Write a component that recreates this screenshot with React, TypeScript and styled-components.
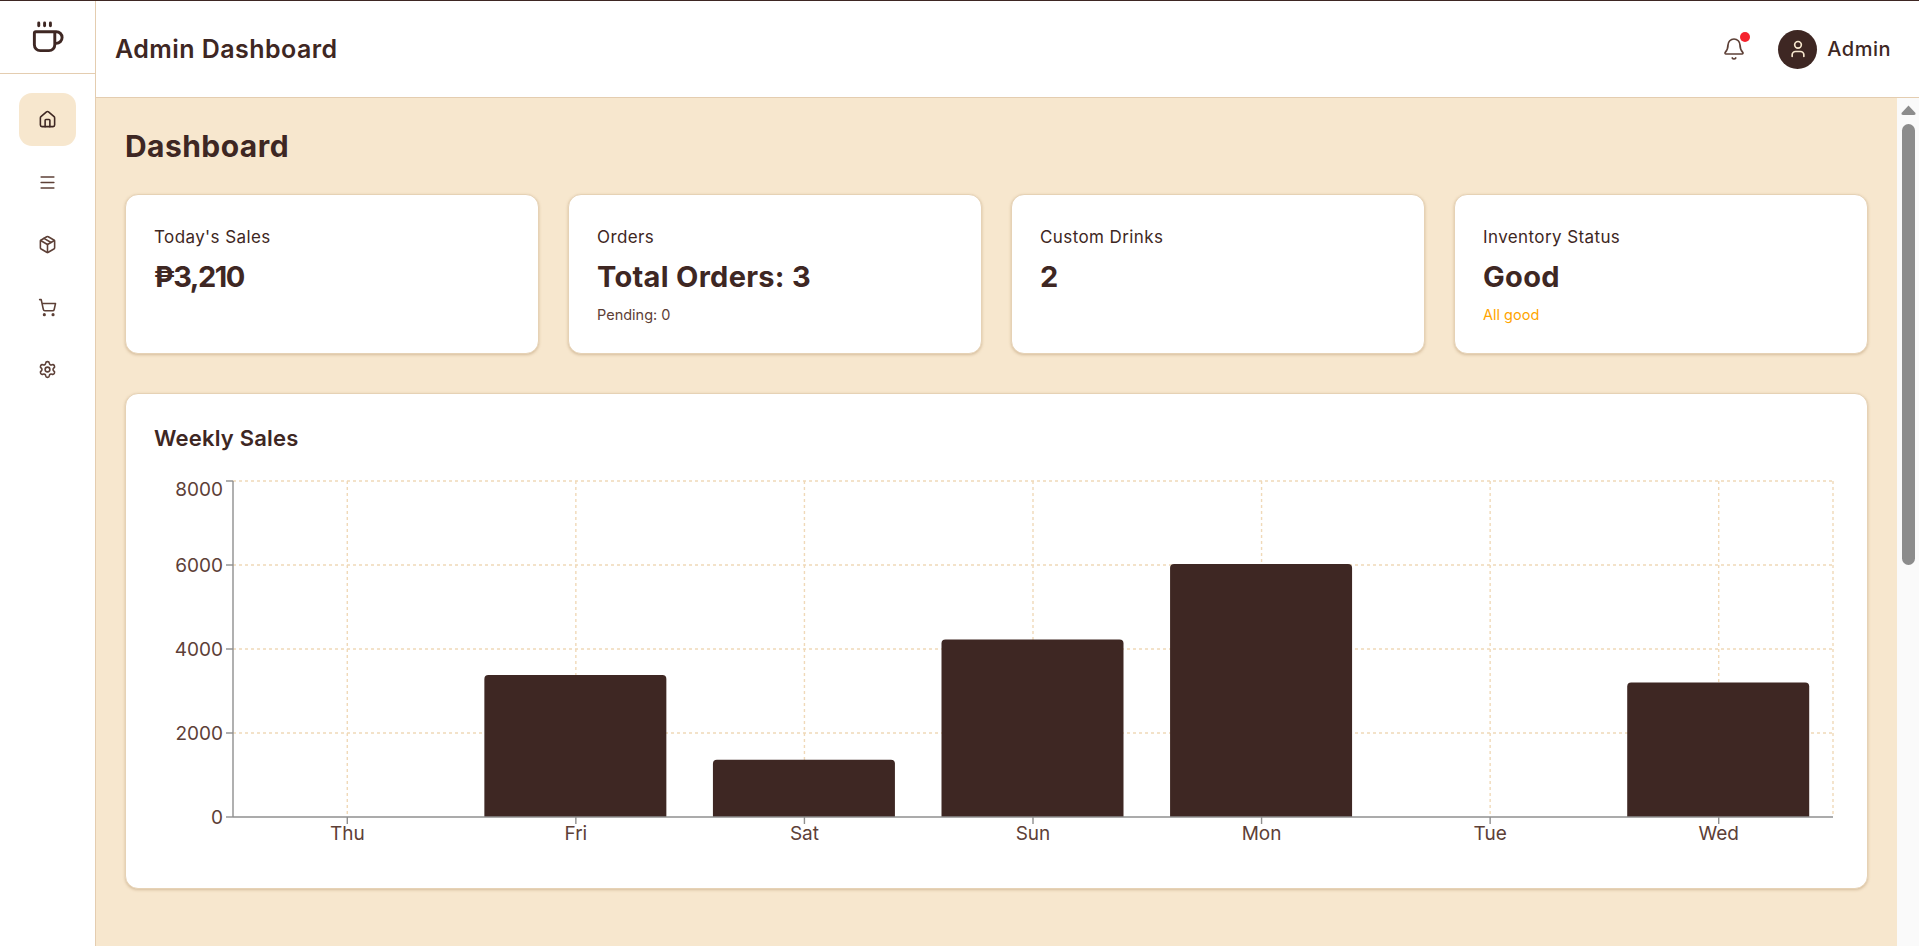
import { Bell, Coffee, House, Menu, Package, Settings, ShoppingCart, User } from "lucide-react";
import styled, { createGlobalStyle } from "styled-components";

const GlobalStyle = createGlobalStyle`
  html, body {
    margin: 0;
    height: 100%;
    overflow: hidden;
    background: #ffffff;
    font-family: Inter, "Noto Sans", "Liberation Sans", sans-serif;
    color: #3e2723;
  }
  * { box-sizing: border-box; }
`;

const Shell = styled.div`
  display: flex;
  height: 946px;
  border-top: 1px solid #3e2723;
`;

const Sidebar = styled.aside`
  width: 96px;
  flex-shrink: 0;
  background: #fff;
  border-right: 1px solid #e4cdb0;
`;

const Logo = styled.div`
  height: 73px;
  border-bottom: 1px solid #e4cdb0;
  display: flex;
  align-items: center;
  justify-content: center;
  color: #3e2723;
`;

const Nav = styled.nav`
  display: flex;
  flex-direction: column;
  gap: 9.5px;
  padding: 19px 19px 0;
`;

const NavItem = styled.a<{ $active?: boolean }>`
  width: 57px;
  height: 53px;
  border-radius: 13px;
  display: flex;
  align-items: center;
  justify-content: center;
  background: ${(props) => (props.$active ? "#f7e7ce" : "transparent")};
  color: ${(props) => (props.$active ? "#3e2723" : "#5d4037")};
`;

const Column = styled.div`
  flex: 1;
  min-width: 0;
  display: flex;
  flex-direction: column;
`;

const Topbar = styled.header`
  height: 97px;
  flex-shrink: 0;
  background: #fff;
  border-bottom: 1px solid #e4cdb0;
  display: flex;
  align-items: center;
  justify-content: space-between;
  padding: 0 28px 0 19px;
`;

const TopTitle = styled.h1`
  margin: 0;
  font-size: 25px;
  font-weight: 600;
  letter-spacing: 0.45px;
  color: #3e2723;
`;

const TopRight = styled.div`
  display: flex;
  align-items: center;
  gap: 32px;
`;

const BellWrap = styled.div`
  position: relative;
  display: flex;
  color: #5d4037;
`;

const Dot = styled.span`
  position: absolute;
  top: -5px;
  right: -4px;
  width: 10px;
  height: 10px;
  border-radius: 50%;
  background: #f5222d;
`;

const UserBox = styled.div`
  display: flex;
  align-items: center;
  gap: 10px;
`;

const Avatar = styled.div`
  width: 39px;
  height: 39px;
  border-radius: 50%;
  background: #3e2723;
  color: #f7e7ce;
  display: flex;
  align-items: center;
  justify-content: center;
`;

const UserName = styled.span`
  font-size: 20px;
  font-weight: 500;
  letter-spacing: 0.5px;
`;

const Body = styled.div`
  flex: 1;
  min-height: 0;
  display: flex;
`;

const Main = styled.main`
  flex: 1;
  min-width: 0;
  overflow: hidden;
  background: #f7e7ce;
  padding: 28px 29px 0;
`;

const ScrollTrack = styled.div`
  width: 22px;
  flex-shrink: 0;
  background: #fafafa;
  display: flex;
  flex-direction: column;
  align-items: center;
  padding: 7px 0 0 1px;
`;

const ScrollThumb = styled.div`
  width: 13px;
  height: 441px;
  margin-top: 9px;
  border-radius: 7px;
  background: #8c8c8c;
`;

const PageTitle = styled.h2`
  margin: 0 0 28px;
  height: 40px;
  line-height: 40px;
  font-size: 30px;
  font-weight: 700;
  letter-spacing: 0.45px;
  color: #3e2723;
`;

const CardGrid = styled.section`
  display: grid;
  grid-template-columns: repeat(4, 1fr);
  gap: 29px;
  margin-bottom: 39px;
`;

const Card = styled.div`
  height: 160px;
  background: #fff;
  border: 1px solid #e6d2b5;
  border-radius: 13px;
  box-shadow: 0 1px 3px rgba(150, 110, 60, 0.35);
  padding: 30px 28px;
`;

const CardLabel = styled.div`
  font-size: 17px;
  line-height: 24px;
  letter-spacing: 0.4px;
  color: #3e2723;
`;

const CardValue = styled.div<{ $tight?: boolean }>`
  margin-top: 7px;
  font-size: 29px;
  line-height: 42px;
  font-weight: 700;
  letter-spacing: ${(props) => (props.$tight ? "-1.5px" : "0.3px")};
  color: #3e2723;
`;

const CardNote = styled.div<{ $warn?: boolean }>`
  margin-top: 6px;
  font-size: 14.5px;
  line-height: 21px;
  color: ${(props) => (props.$warn ? "#ffa500" : "#5d4037")};
`;

const ChartPanel = styled.section`
  height: 496px;
  background: #fff;
  border: 1px solid #e6d2b5;
  border-radius: 13px;
  box-shadow: 0 1px 3px rgba(150, 110, 60, 0.35);
  padding: 29px 29px 0;
`;

const PanelTitle = styled.h3`
  margin: 0 0 10px -1px;
  font-size: 22px;
  line-height: 30px;
  font-weight: 600;
  letter-spacing: 0.2px;
  color: #3e2723;
`;

const ChartSvg = styled.svg`
  display: block;
  font-family: Inter, "Noto Sans", "Liberation Sans", sans-serif;
  font-size: 19px;
`;

const cards = [
  { label: "Today's Sales", value: "₱3,210", tight: true },
  { label: "Orders", value: "Total Orders: 3", note: "Pending: 0" },
  { label: "Custom Drinks", value: "2" },
  { label: "Inventory Status", value: "Good", note: "All good", warn: true },
];

const sales = [
  { day: "Thu", total: 0 },
  { day: "Fri", total: 3360 },
  { day: "Sat", total: 1340 },
  { day: "Sun", total: 4200 },
  { day: "Mon", total: 6000 },
  { day: "Tue", total: 0 },
  { day: "Wed", total: 3180 },
];

const left = 78;
const right = 1678;
const top = 18;
const bottom = 354;
const step = (right - left) / sales.length;
const barW = 182;
const yFor = (v: number) => bottom - (v / 8000) * (bottom - top);

function SalesChart() {
  const gridColor = "#f0d9b8";
  const axisColor = "#8f8f8f";
  const textColor = "#5d4037";
  return (
    <ChartSvg width={1684} height={400}>
      {[8000, 6000, 4000, 2000].map((v) => (
        <line key={v} x1={left} x2={right} y1={yFor(v)} y2={yFor(v)} stroke={gridColor} strokeWidth={1.4} strokeDasharray="3 3" />
      ))}
      {sales.map((s, i) => (
        <line key={s.day} x1={left + step * (i + 0.5)} x2={left + step * (i + 0.5)} y1={top} y2={bottom} stroke={gridColor} strokeWidth={1.4} strokeDasharray="3 3" />
      ))}
      <line x1={right} x2={right} y1={top} y2={bottom} stroke={gridColor} strokeWidth={1.4} strokeDasharray="3 3" />

      {sales.filter((s) => s.total > 0).map((s) => {
        const i = sales.indexOf(s);
        const x = left + step * (i + 0.5) - barW / 2 - 0.5;
        const y = yFor(s.total) - 1;
        return (
          <path
            key={s.day}
            d={`M${x} ${bottom}V${y + 4}Q${x} ${y} ${x + 4} ${y}H${x + barW - 4}Q${x + barW} ${y} ${x + barW} ${y + 4}V${bottom}Z`}
            fill="#3e2723"
          />
        );
      })}

      <line x1={left} x2={left} y1={top} y2={bottom} stroke={axisColor} strokeWidth={1.4} />
      <line x1={left} x2={right} y1={bottom} y2={bottom} stroke={axisColor} strokeWidth={1.4} />
      {[8000, 6000, 4000, 2000, 0].map((v) => (
        <g key={v}>
          <line x1={left - 7} x2={left} y1={yFor(v)} y2={yFor(v)} stroke={axisColor} strokeWidth={1.4} />
          <text x={left - 10} y={yFor(v) + (v === 8000 ? 15 : 7)} textAnchor="end" fill={textColor}>
            {v}
          </text>
        </g>
      ))}
      {sales.map((s, i) => (
        <g key={s.day}>
          <line x1={left + step * (i + 0.5)} x2={left + step * (i + 0.5)} y1={bottom} y2={bottom + 7} stroke={axisColor} strokeWidth={1.4} />
          <text x={left + step * (i + 0.5)} y={bottom + 23} textAnchor="middle" fill={textColor}>
            {s.day}
          </text>
        </g>
      ))}
    </ChartSvg>
  );
}

export default function App() {
  return (
    <>
      <GlobalStyle />
      <Shell>
        <Sidebar>
          <Logo>
            <Coffee size={35} strokeWidth={2} />
          </Logo>
          <Nav>
            <NavItem $active><House size={19} /></NavItem>
            <NavItem><Menu size={19} /></NavItem>
            <NavItem><Package size={19} /></NavItem>
            <NavItem><ShoppingCart size={19} /></NavItem>
            <NavItem><Settings size={19} /></NavItem>
          </Nav>
        </Sidebar>
        <Column>
          <Topbar>
            <TopTitle>Admin Dashboard</TopTitle>
            <TopRight>
              <BellWrap>
                <Bell size={24} strokeWidth={1.7} />
                <Dot />
              </BellWrap>
              <UserBox>
                <Avatar><User size={20} /></Avatar>
                <UserName>Admin</UserName>
              </UserBox>
            </TopRight>
          </Topbar>
          <Body>
            <Main>
              <PageTitle>Dashboard</PageTitle>
              <CardGrid>
                {cards.map((c) => (
                  <Card key={c.label}>
                    <CardLabel>{c.label}</CardLabel>
                    <CardValue $tight={c.tight}>{c.value}</CardValue>
                    {c.note && <CardNote $warn={c.warn}>{c.note}</CardNote>}
                  </Card>
                ))}
              </CardGrid>
              <ChartPanel>
                <PanelTitle>Weekly Sales</PanelTitle>
                <SalesChart />
              </ChartPanel>
            </Main>
            <ScrollTrack>
              <svg width="15" height="10" viewBox="0 0 15 10">
                <path d="M7.5 0.5 L14.5 8 Q15 10 13 10 L2 10 Q0 10 0.5 8 Z" fill="#8c8c8c" />
              </svg>
              <ScrollThumb />
            </ScrollTrack>
          </Body>
        </Column>
      </Shell>
    </>
  );
}
